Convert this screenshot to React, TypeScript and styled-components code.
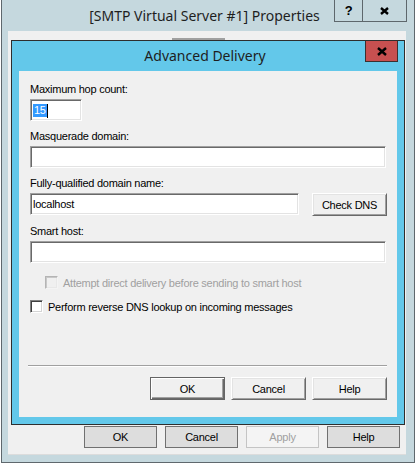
import styled, { createGlobalStyle } from "styled-components";

const GlobalStyle = createGlobalStyle`
  html, body {
    margin: 0;
    padding: 0;
    background: #ffffff;
  }
  body {
    font-family: "Liberation Sans", Arial, sans-serif;
    font-size: 11px;
    letter-spacing: -0.25px;
    color: #000000;
  }
  * {
    box-sizing: border-box;
  }
`;

const Screen = styled.div`
  width: 415px;
  height: 468px;
  overflow: hidden;
  padding-left: 1px;
`;

const Window = styled.div`
  width: 414px;
  height: 463px;
  border: 1px solid #5f686d;
  border-top: none;
  background: #c5d8de;
  display: flex;
  flex-direction: column;
`;

const TitleBar = styled.div`
  height: 31px;
  flex: none;
  display: grid;
  grid-template-columns: 1fr auto 1fr;
  align-items: start;
  padding-right: 7px;
`;

const TitleText = styled.div<{ $height: number }>`
  grid-column: 2;
  font-family: "Noto Sans", "Open Sans", sans-serif;
  font-size: 14px;
  letter-spacing: 0;
  line-height: ${(p) => p.$height}px;
  color: #1e1e1e;
  white-space: nowrap;
`;

const CaptionButtons = styled.div`
  grid-column: 3;
  justify-self: end;
  display: flex;
`;

const CaptionButton = styled.div<{ $width: number }>`
  width: ${(p) => p.$width}px;
  height: 22px;
  border: 1px solid #5e676c;
  border-top: none;
  display: flex;
  align-items: center;
  justify-content: center;
  font-weight: bold;
  font-size: 13px;
  color: #000000;

  & + & {
    border-left: none;
  }
`;

const Client = styled.div`
  margin: 0 8px 0 6px;
  height: 424px;
  background: #f0f0f0;
  border-bottom: 1px solid #dcdcdc;
  display: flex;
  flex-direction: column;
`;

const TabStrip = styled.div`
  height: 9px;
  flex: none;
  padding: 7px 0 0 164px;
`;

const TabEdge = styled.div`
  width: 53px;
  height: 2px;
  background: #a0a0a0;
`;

const Dialog = styled.div`
  margin-left: 3px;
  width: 394px;
  height: 385px;
  flex: none;
  border: 1px solid #2e2e2e;
  background: #63c8ea;
  display: flex;
  flex-direction: column;
`;

const DialogTitleBar = styled.div`
  height: 30px;
  flex: none;
  display: grid;
  grid-template-columns: 1fr auto 1fr;
  align-items: start;
  padding-right: 6px;
`;

const CloseButton = styled.div`
  grid-column: 3;
  justify-self: end;
  width: 33px;
  height: 21px;
  background: #c75050;
  border: 1px solid #3b3030;
  border-top: none;
  display: flex;
  align-items: center;
  justify-content: center;
`;

const DialogClient = styled.div`
  flex: 1;
  margin: 0 7px 7px 7px;
  background: #f0f0f0;
  padding: 12px 10px 17px 11px;
  display: flex;
  flex-direction: column;
`;

const Form = styled.div`
  display: flex;
  flex-direction: column;
  gap: 9px;
`;

const Field = styled.div`
  display: flex;
  flex-direction: column;
  gap: 3px;
`;

const Label = styled.div`
  line-height: 13px;
  height: 13px;
  white-space: nowrap;
`;

const TextBox = styled.div<{ $width: number }>`
  width: ${(p) => p.$width}px;
  height: 22px;
  background: #ffffff;
  border: 1px solid;
  border-color: #a0a0a0 #ffffff #ffffff #a0a0a0;
  box-shadow: inset 1px 1px #696969, inset -1px -1px #e3e3e3;
  padding: 0 2px;
  display: flex;
  align-items: center;
  line-height: 13px;
`;

const Selected = styled.span`
  background: #3399ff;
  color: #ffffff;
  padding: 0 1px;
`;

const Caret = styled.span`
  width: 1px;
  height: 14px;
  margin-top: 2px;
  background: #000000;
`;

const InlineRow = styled.div`
  display: flex;
  align-items: flex-start;
  gap: 13px;
`;

const ClassicButton = styled.div<{ $default?: boolean }>`
  width: 75px;
  height: 23px;
  background: #f0f0f0;
  display: flex;
  align-items: center;
  justify-content: center;
  border: 1px solid;
  border-color: ${(p) =>
    p.$default ? "#646464" : "#ffffff #696969 #696969 #ffffff"};
  box-shadow: ${(p) =>
    p.$default
      ? "inset 1px 1px #ffffff, inset -1px -1px #696969, inset -2px -2px #a0a0a0"
      : "inset 1px 1px #e3e3e3, inset -1px -1px #a0a0a0"};
`;

const CheckRow = styled.div<{ $indent: number; $disabled?: boolean }>`
  display: flex;
  align-items: center;
  gap: 5px;
  height: 13px;
  margin-left: ${(p) => p.$indent}px;
  color: ${(p) => (p.$disabled ? "#a0a0a0" : "#000000")};
  white-space: nowrap;
`;

const CheckBox = styled.span<{ $disabled?: boolean }>`
  width: 13px;
  height: 13px;
  flex: none;
  border: 1px solid;
  border-color: ${(p) =>
    p.$disabled ? "#b4b4b4 #f4f4f4 #f4f4f4 #b4b4b4" : "#808080 #ffffff #ffffff #808080"};
  box-shadow: ${(p) =>
    p.$disabled
      ? "inset 1px 1px #c8c8c8, inset -1px -1px #e8e8e8"
      : "inset 1px 1px #404040, inset -1px -1px #d4d4d4"};
  background: ${(p) => (p.$disabled ? "#f0f0f0" : "#ffffff")};
`;

const Checks = styled.div`
  display: flex;
  flex-direction: column;
  gap: 11px;
  margin-top: 13px;
`;

const Separator = styled.div`
  margin: auto 0 0 -2px;
  border-top: 1px solid #a0a0a0;
  border-bottom: 1px solid #ffffff;
`;

const ButtonRow = styled.div`
  display: flex;
  justify-content: flex-end;
  gap: 6px;
  margin-top: 10px;
`;

const SheetButtons = styled.div`
  display: flex;
  justify-content: flex-end;
  gap: 8px;
  margin-top: 1px;
  padding-right: 6px;
`;

const FlatButton = styled.div<{ $disabled?: boolean }>`
  width: 73px;
  height: 22px;
  display: flex;
  align-items: center;
  justify-content: center;
  border: 1px solid ${(p) => (p.$disabled ? "#c4c4c4" : "#707070")};
  background: ${(p) => (p.$disabled ? "#f4f4f4" : "#dddddd")};
  color: ${(p) => (p.$disabled ? "#a0a0a0" : "#000000")};
`;

function CloseGlyph({ w, h }: { w: number; h: number }) {
  return (
    <svg width={w} height={h} viewBox={`0 0 ${w} ${h}`}>
      <path
        d={`M1 1 L${w - 1} ${h - 1} M${w - 1} 1 L1 ${h - 1}`}
        stroke="#000000"
        strokeWidth="2.4"
      />
    </svg>
  );
}

export default function App() {
  return (
    <>
      <GlobalStyle />
      <Screen>
        <Window>
          <TitleBar>
            <TitleText $height={31}>[SMTP Virtual Server #1] Properties</TitleText>
            <CaptionButtons>
              <CaptionButton $width={29}>?</CaptionButton>
              <CaptionButton $width={44}>
                <CloseGlyph w={9} h={8} />
              </CaptionButton>
            </CaptionButtons>
          </TitleBar>
          <Client>
            <TabStrip>
              <TabEdge />
            </TabStrip>
            <Dialog>
              <DialogTitleBar>
                <TitleText $height={30}>Advanced Delivery</TitleText>
                <CloseButton>
                  <CloseGlyph w={10} h={9} />
                </CloseButton>
              </DialogTitleBar>
              <DialogClient>
                <Form>
                  <Field>
                    <Label>Maximum hop count:</Label>
                    <TextBox $width={52}>
                      <Selected>15</Selected>
                      <Caret />
                    </TextBox>
                  </Field>
                  <Field>
                    <Label>Masquerade domain:</Label>
                    <TextBox $width={356} />
                  </Field>
                  <Field>
                    <Label>Fully-qualified domain name:</Label>
                    <InlineRow>
                      <TextBox $width={269}>localhost</TextBox>
                      <ClassicButton>Check DNS</ClassicButton>
                    </InlineRow>
                  </Field>
                  <Field>
                    <Label>Smart host:</Label>
                    <TextBox $width={356} />
                  </Field>
                </Form>
                <Checks>
                  <CheckRow $indent={15} $disabled>
                    <CheckBox $disabled />
                    Attempt direct delivery before sending to smart host
                  </CheckRow>
                  <CheckRow $indent={0}>
                    <CheckBox />
                    Perform reverse DNS lookup on incoming messages
                  </CheckRow>
                </Checks>
                <Separator />
                <ButtonRow>
                  <ClassicButton $default>OK</ClassicButton>
                  <ClassicButton>Cancel</ClassicButton>
                  <ClassicButton>Help</ClassicButton>
                </ButtonRow>
              </DialogClient>
            </Dialog>
            <SheetButtons>
              <FlatButton>OK</FlatButton>
              <FlatButton>Cancel</FlatButton>
              <FlatButton $disabled>Apply</FlatButton>
              <FlatButton>Help</FlatButton>
            </SheetButtons>
          </Client>
        </Window>
      </Screen>
    </>
  );
}
